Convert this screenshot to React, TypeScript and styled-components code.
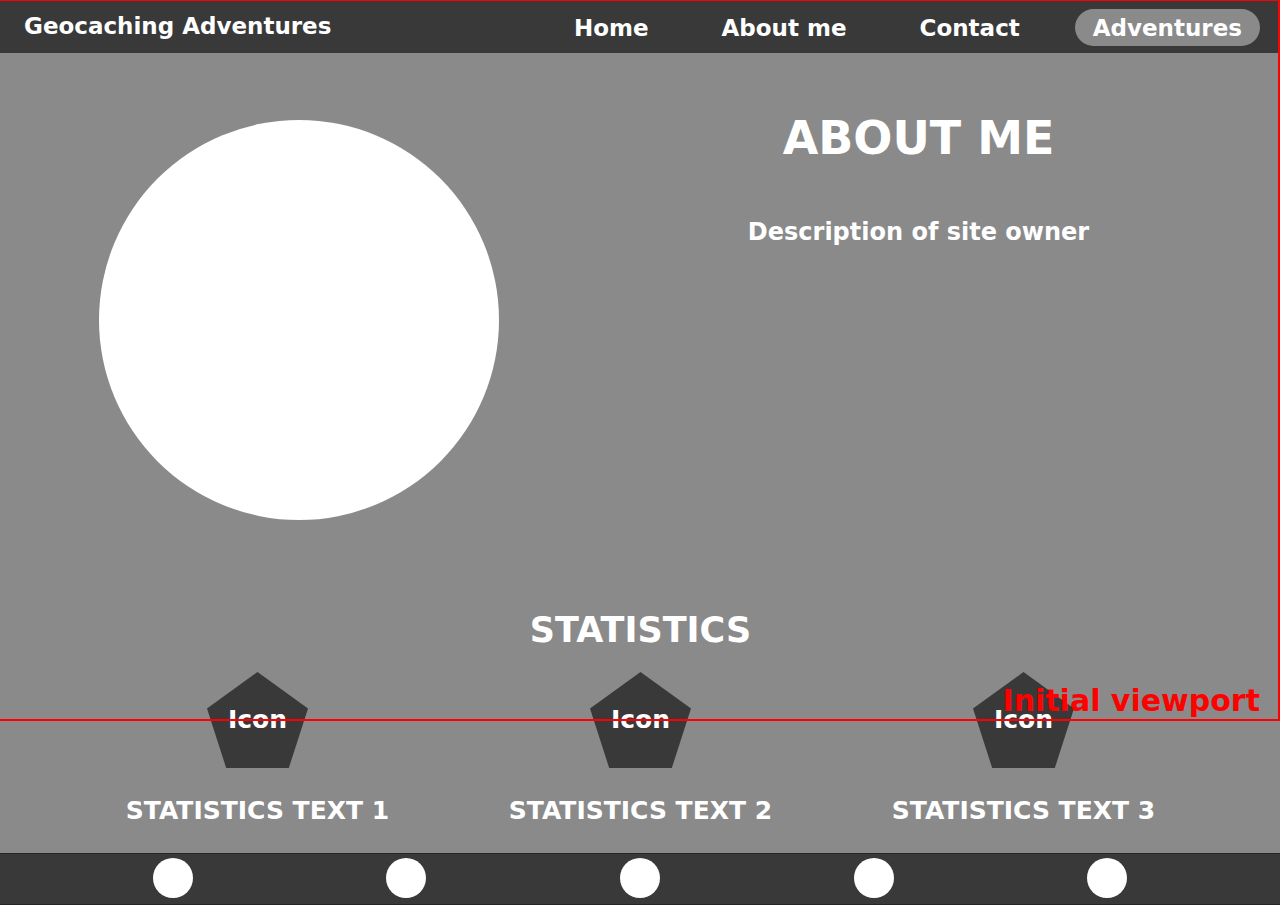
import React from "react";
import styled, { createGlobalStyle } from "styled-components";

const colors = {
  page: "#8a8a8a",
  bar: "#393939",
  line: "#252525",
  text: "#ffffff",
  guide: "#ff0000",
};

const GlobalStyle = createGlobalStyle`
  *, *::before, *::after {
    box-sizing: border-box;
  }

  body {
    margin: 0;
    background: ${colors.page};
    color: ${colors.text};
    font-family: Verdana, "DejaVu Sans", sans-serif;
    font-size: 24px;
    font-weight: 700;
    line-height: 32px;
  }
`;

const Page = styled.div`
  position: relative;
  display: flex;
  flex-direction: column;
  min-height: 100vh;
`;

const Header = styled.header`
  display: flex;
  align-items: center;
  justify-content: space-between;
  min-height: 53px;
  padding: 2px 20px 0 24px;
  background: ${colors.bar};
  font-size: 23px;
`;

const Brand = styled.a`
  padding-bottom: 3px;
  color: inherit;
  text-decoration: none;
`;

const Nav = styled.nav`
  display: flex;
  gap: 37px;
`;

const NavLink = styled.a<{ $active?: boolean }>`
  padding: 3px 18px 2px;
  border-radius: 19px;
  background: ${({ $active }) => ($active ? colors.page : "transparent")};
  color: inherit;
  text-decoration: none;
`;

const Main = styled.main`
  flex: 1;
`;

const About = styled.section`
  display: grid;
  grid-template-columns: 598fr 641fr;
  padding: 56px 41px 0 0;
`;

const Portrait = styled.div`
  justify-self: center;
  width: 400px;
  height: 400px;
  margin-top: 11px;
  border-radius: 50%;
  background: ${colors.text};
`;

const AboutText = styled.div`
  text-align: center;
`;

const Title = styled.h1`
  margin: 0 0 49px;
  font-size: 46px;
  line-height: 58px;
`;

const Description = styled.p`
  margin: 0;
`;

const Statistics = styled.section`
  padding: 88px 65px 26px 66px;
`;

const SectionTitle = styled.h2`
  margin: 0 0 20px;
  font-size: 35px;
  line-height: 44px;
  text-align: center;
`;

const StatList = styled.ul`
  display: grid;
  grid-template-columns: repeat(3, 1fr);
  margin: 0;
  padding: 0;
  font-size: 25px;
  list-style: none;
`;

const Stat = styled.li`
  display: flex;
  flex-direction: column;
  align-items: center;
  gap: 27px;
`;

const IconBadge = styled.div`
  display: grid;
  place-items: center;
  width: 101px;
  height: 96px;
  background: ${colors.bar};
  clip-path: polygon(50% 0, 100% 38%, 81% 100%, 19% 100%, 0 38%);
`;

const Footer = styled.footer`
  display: grid;
  grid-template-columns: repeat(5, 1fr);
  justify-items: center;
  padding: 4px 56px 6px;
  border: solid ${colors.line};
  border-width: 1px 0;
  background: ${colors.bar};
`;

const SocialLink = styled.a`
  width: 40px;
  height: 40px;
  border-radius: 50%;
  background: ${colors.text};
`;

const ViewportGuide = styled.div`
  position: absolute;
  inset: 0 0 auto;
  display: flex;
  align-items: flex-end;
  justify-content: flex-end;
  height: 721px;
  padding: 0 18px 0 0;
  border: solid ${colors.guide};
  border-width: 1px 2px 2px 0;
  color: ${colors.guide};
  font-size: 30px;
  line-height: 36px;
  pointer-events: none;
`;

const links = ["Home", "About me", "Contact", "Adventures"];
const stats = ["STATISTICS TEXT 1", "STATISTICS TEXT 2", "STATISTICS TEXT 3"];
const socials = [1, 2, 3, 4, 5];

export default function App() {
  return (
    <Page>
      <GlobalStyle />
      <Header>
        <Brand href="#">Geocaching Adventures</Brand>
        <Nav>
          {links.map((label) => (
            <NavLink key={label} href="#" $active={label === "Adventures"}>
              {label}
            </NavLink>
          ))}
        </Nav>
      </Header>
      <Main>
        <About>
          <Portrait />
          <AboutText>
            <Title>ABOUT ME</Title>
            <Description>Description of site owner</Description>
          </AboutText>
        </About>
        <Statistics>
          <SectionTitle>STATISTICS</SectionTitle>
          <StatList>
            {stats.map((label) => (
              <Stat key={label}>
                <IconBadge>Icon</IconBadge>
                <span>{label}</span>
              </Stat>
            ))}
          </StatList>
        </Statistics>
      </Main>
      <Footer>
        {socials.map((n) => (
          <SocialLink key={n} href="#" aria-label={`Social link ${n}`} />
        ))}
      </Footer>
      <ViewportGuide>Initial viewport</ViewportGuide>
    </Page>
  );
}
